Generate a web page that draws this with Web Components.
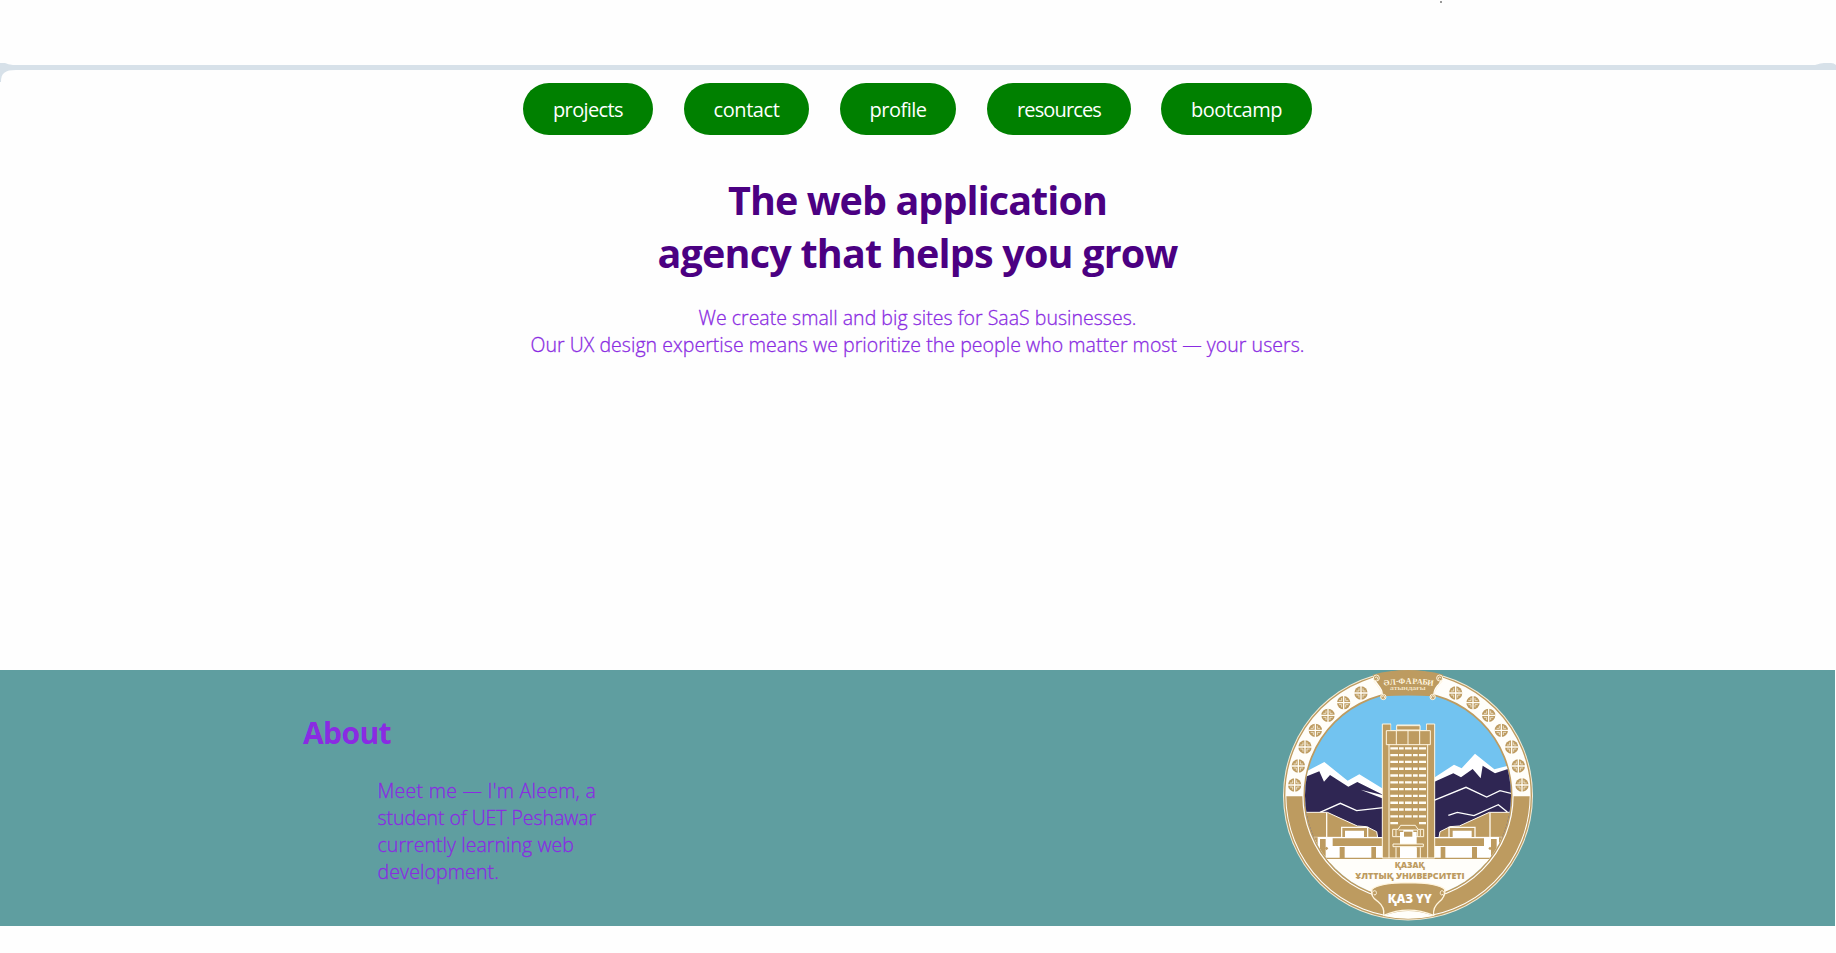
<!DOCTYPE html>
<html lang="en">
<head>
<meta charset="utf-8">
<title>Agency</title>
<style>
html,body{margin:0;background:#fefefe}
body{height:953px;overflow:hidden;font-family:"Open Sans","Noto Sans",sans-serif}
</style>
</head>
<body>
<agency-page></agency-page>
<script>
const define = (name, html, ready) => customElements.define(name, class extends HTMLElement {
  connectedCallback() {
    if (this.shadowRoot) return;
    const t = document.createElement('template');
    t.innerHTML = html;
    this.attachShadow({mode: 'open'}).append(t.content.cloneNode(true));
    if (ready) ready(this);
  }
});

/* One line of text, tracked to a given measure in pixels. */
define('text-line', `<style>:host{display:block;white-space:nowrap}span{display:inline-block}</style><span><slot></slot></span>`, el => {
  const want = +el.getAttribute('measure'), span = el.shadowRoot.querySelector('span');
  const n = el.textContent.length, w = span.getBoundingClientRect().width;
  if (want) {
    const ls = (want - w) / n;
    span.style.letterSpacing = ls.toFixed(3) + 'px';
  }
});

define('top-strip', `<style>
:host{display:block;height:83px;position:relative}
svg{display:block}
i{position:absolute;left:1440px;top:1px;width:2px;height:2px;background:#999}
</style>
<svg width="1836" height="83"><path fill="#d7e1e9" d="M0 63H5Q8 64.6 13 65H1815Q1821 63 1824 63H1831Q1834 63 1836 65V70H16C5 70 1 73 1 82H0Z"/></svg><i></i>`);

define('nav-pill', `<style>
:host{display:flex;box-sizing:border-box;height:52px;border-radius:26px;background:#008000;color:#fff;font-size:20px;line-height:52px;justify-content:center}
a{display:block;padding:1px 0 0}
</style><a><slot></slot></a>`, el => { el.style.width = el.getAttribute('width') + 'px'; });

define('nav-bar', `<style>
:host{display:flex;justify-content:center;gap:31px;padding-right:1px}
nav-pill:last-child{margin-left:-1px}
</style>
<nav-pill width="130"><text-line measure="70">projects</text-line></nav-pill>
<nav-pill width="125"><text-line measure="66">contact</text-line></nav-pill>
<nav-pill width="116"><text-line measure="57">profile</text-line></nav-pill>
<nav-pill width="144"><text-line measure="84">resources</text-line></nav-pill>
<nav-pill width="151"><text-line measure="91">bootcamp</text-line></nav-pill>`);

define('hero-block', `<style>
:host{display:block;text-align:center;height:535px;padding-right:1px;box-sizing:border-box}
h1{margin:0;padding-top:39px;font-size:39.5px;line-height:53.3px;font-weight:700;color:#4b0082}
p{margin:23px 0 0;font-size:19.5px;line-height:27px;font-weight:300;color:#8a2be2;-webkit-text-stroke:.3px #8a2be2}
</style>
<h1><text-line measure="379">The web application</text-line><text-line measure="520">agency that helps you grow</text-line></h1>
<p><text-line measure="438">We create small and big sites for SaaS businesses.</text-line><text-line measure="774">Our UX design expertise means we prioritize the people who matter most — your users.</text-line></p>`);

define('about-band', `<style>
:host{display:flex;justify-content:space-between;width:1835px;height:256px;box-sizing:border-box;padding:0 302px 0 303px;background:#5f9ea0;color:#8a2be2}
h2{margin:43px 0 0;font-size:30px;line-height:40px;font-weight:700}
p{margin:23.5px 0 0 74.5px;font-size:19.5px;line-height:27px;font-weight:300;-webkit-text-stroke:.3px #8a2be2}
</style>
<section><h2><text-line measure="88">About</text-line></h2>
<p><text-line measure="218.5">Meet me — I'm Aleem, a</text-line><text-line measure="218.5">student of UET Peshawar</text-line><text-line measure="196.5">currently learning web</text-line><text-line measure="121.5">development.</text-line></p></section>
<university-seal></university-seal>`);

define('university-seal', `<style>:host{display:block;width:250px;height:251px}svg{display:block}</style>
<svg width="250" height="251" viewBox="39 30 750 753">
<defs>
<clipPath id="inner"><circle cx="414" cy="406.5" r="309"/></clipPath>
<clipPath id="lower"><rect x="30" y="409" width="780" height="380"/></clipPath>
<g id="coin"><circle r="20" fill="#bd9b60"/><path d="M0-21V21M-21 0H21" stroke="#fffdf5" stroke-width="4"/><path d="M-6-14V-6H-14M6-14V-6H14M-6 14V6H-14M6 14V6H14" fill="none" stroke="#fffdf5" stroke-width="2"/></g>
</defs>
<circle cx="414" cy="406.5" r="375" fill="#f4ecd8"/>
<circle cx="414" cy="406.5" r="370" fill="#fffefa" stroke="#bd9b60" stroke-width="4"/>
<circle cx="414" cy="406.5" r="341" fill="none" stroke="#bd9b60" stroke-width="48" clip-path="url(#lower)"/>
<circle cx="414" cy="406.5" r="311" fill="#72c3f0" stroke="#bd9b60" stroke-width="5"/>
<g clip-path="url(#inner)">
<path fill="#fff" d="M100 342L110 334 163 306 233 362 268 343 340 387V550H100ZM490 355L552 314 575 325 615 281 673 328 730 313V550H490Z"/>
<path fill="#2f2653" d="M100 353L148 334 162 365 180 345 235 380 262 366 340 405V540H100ZM490 367L550 340 573 352 608 327 632 355 638 317 675 340 730 322V540H490Z"/>
<path fill="#fff" d="M272 389L340 406V416Z"/>
<path fill="none" stroke="#fff" stroke-width="4" d="M150 457L211 430 260 452 340 443M492 421L588 382 650 411 690 392 730 402M535 466L562 457 612 467 685 434 712 456"/>
<g id="wing">
<path fill="#bd9b60" stroke="#fffaf0" stroke-width="3" d="M98 457H172L262 498 290 500 320 515 323 532H98Z"/>
<path d="M170 458V532" stroke="#fffaf0" stroke-width="4"/>
<path fill="#bd9b60" stroke="#fffaf0" stroke-width="4" d="M215 532V502H293V532"/>
<path fill="#fff" d="M225 512H282V532H225ZM98 531H340V610H98Z"/>
<path fill="#bd9b60" d="M188 535H338V558H188ZM150 537H167V590H150ZM209 561H224V594H209ZM304 561H318V594H304ZM105 532H143V580H125Z"/>
<path d="M170 560L175 565 170 571 164 565Z" fill="#bd9b60"/>
</g>
<use href="#wing" transform="translate(830 0) scale(-1 1)"/>
<path fill="#fffefa" d="M90 597H740V740H90Z"/>
<path d="M155 595H675" stroke="#bd9b60" stroke-width="4"/>
</g>
<path fill="#bd9b60" stroke="#fff7e3" stroke-width="3" d="M337 594V192H363V212H380V195H450V212H469V192H494V594Z"/>
<path fill="#72c3f0" d="M364 191H379V210H364ZM451 191H468V210H451Z"/>
<path fill="#bd9b60" stroke="#fff7e3" stroke-width="3" d="M349 212H481V254H349ZM380 197H450V210H380Z"/>
<path fill="none" stroke="#fff7e3" stroke-width="3" d="M379 212V254M414 212V254M449 212V254M357 254V594M473 254V594"/>
<g id="floors"></g>
<path fill="#bd9b60" stroke="#fff7e3" stroke-width="3" d="M368 508H384L392 496H436L444 508H461V530H368Z"/>
<path fill="none" stroke="#fff7e3" stroke-width="3" d="M378 510V528M451 510V528M386 510H443V530"/>
<path fill="#fff" d="M390 516H400V510H430V516H440V594H390Z"/>
<path fill="#bd9b60" d="M402 515H427V530H402Z"/>
<path fill="#bd9b60" stroke="#fff7e3" stroke-width="3" d="M369 552H460V560H369ZM378 562V594M451 562V594"/>
<path fill="#fff" d="M390 564H440V593H390Z"/>
<g id="coins"></g>
<path fill="#bd9b60" d="M308 44Q414 16 520 44Q511 66 501 76Q488 92 490 109Q414 104 338 109Q341 92 327 76Q315 62 308 44Z"/>
<g id="scroll" fill="#bd9b60" stroke="#fff5df" stroke-width="3"><path d="M311 63Q334 88 337 106" fill="none"/><circle cx="319" cy="54" r="9"/><path d="M315 55A4 4 0 1 1 320 59" fill="none"/><circle cx="340" cy="111" r="8"/><path d="M336 112A4 4 0 1 1 341 115" fill="none"/></g>
<use href="#scroll" transform="translate(828 0) scale(-1 1)"/>
<g font-family="Liberation Serif,serif" fill="#fff5df" font-weight="700">
<text font-size="24" text-anchor="middle"><tspan x="351" y="77" rotate="-9">Ә</tspan><tspan x="369" y="75" rotate="-6">Л</tspan><tspan x="382" y="73">-</tspan><tspan x="396" y="72" rotate="-2">Ф</tspan><tspan x="416" y="71">А</tspan><tspan x="434" y="71" rotate="3">Р</tspan><tspan x="449" y="72" rotate="4">А</tspan><tspan x="465" y="73" rotate="6">Б</tspan><tspan x="480" y="75" rotate="8">И</tspan></text>
<text x="360" y="90" font-size="20" font-weight="400" textLength="107" lengthAdjust="spacingAndGlyphs">атындағы</text></g>
<g font-family="Open Sans,sans-serif" font-weight="800" fill="#bd9b60"><text x="374" y="624" font-size="26" textLength="91" lengthAdjust="spacingAndGlyphs">ҚАЗАҚ</text><text x="256" y="656" font-size="26" textLength="328" lengthAdjust="spacingAndGlyphs">ҰЛТТЫҚ УНИВЕРСИТЕТІ</text></g>
<path fill="#bd9b60" stroke="#fff5df" stroke-width="4" d="M306 688Q325 669 414 668Q505 669 524 688Q528 709 507 726Q488 742 491 766Q414 735 341 766Q345 742 323 724Q300 710 306 688Z"/>
<path fill="#fffefa" d="M341 768Q414 738 491 768Q414 785 341 768Z"/>
<path fill="none" stroke="#fff5df" stroke-width="3" d="M308 708C300 694 321 684 319 701Q316 709 311 703M520 708C530 694 509 684 511 701Q514 709 519 703"/>
<text x="353" y="729" font-family="Open Sans,sans-serif" font-size="38" font-weight="800" fill="#fff" textLength="132" lengthAdjust="spacingAndGlyphs">ҚАЗ ҮҮ</text>
</svg>`, el => {
  const NS = 'http://www.w3.org/2000/svg', root = el.shadowRoot;
  const coins = root.getElementById('coins'), floors = root.getElementById('floors');
  for (const [x, y] of [[273,99],[221,128],[174,166],[136,211],[105,261],[85,318],[74,375]])
    for (const cx of [x, 830 - x]) {
      const u = document.createElementNS(NS, 'use');
      u.setAttribute('href', '#coin');
      u.setAttribute('transform', `translate(${cx} ${y})`);
      coins.append(u);
    }
  let d = '';
  for (let i = 0; i < 12; i++) {
    const y = 265 + i * 20.4;
    d += i < 11 ? `M361 ${y}H384M387 ${y}H401M405 ${y}H425M429 ${y}H443M447 ${y}H468` : `M361 ${y}H384M447 ${y}H468`;
  }
  const p = document.createElementNS(NS, 'path');
  p.setAttribute('d', d); p.setAttribute('stroke', '#fffdf5'); p.setAttribute('stroke-width', '7');
  floors.append(p);
});

define('agency-page', `<style>:host{display:flex;flex-direction:column;width:1836px;height:953px}</style>
<top-strip></top-strip><nav-bar></nav-bar><hero-block></hero-block><about-band></about-band>`);
</script>
</body>
</html>
